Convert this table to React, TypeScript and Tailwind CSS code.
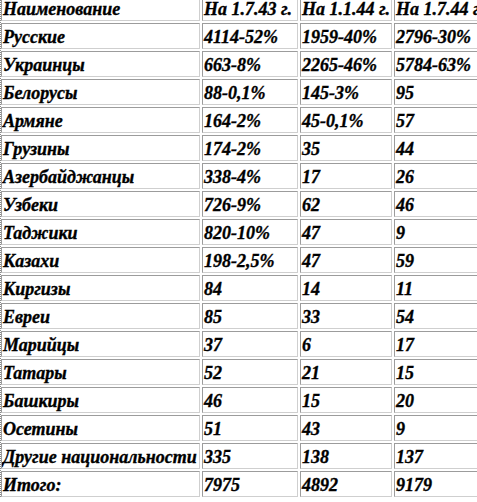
import React from "react";

const header = ["Наименование", "На 1.7.43 г.", "На 1.1.44 г.", "На 1.7.44 г."];

const rows: string[][] = [
  ["Русские", "4114-52%", "1959-40%", "2796-30%"],
  ["Украинцы", "663-8%", "2265-46%", "5784-63%"],
  ["Белорусы", "88-0,1%", "145-3%", "95"],
  ["Армяне", "164-2%", "45-0,1%", "57"],
  ["Грузины", "174-2%", "35", "44"],
  ["Азербайджанцы", "338-4%", "17", "26"],
  ["Узбеки", "726-9%", "62", "46"],
  ["Таджики", "820-10%", "47", "9"],
  ["Казахи", "198-2,5%", "47", "59"],
  ["Киргизы", "84", "14", "11"],
  ["Евреи", "85", "33", "54"],
  ["Марийцы", "37", "6", "17"],
  ["Татары", "52", "21", "15"],
  ["Башкиры", "46", "15", "20"],
  ["Осетины", "51", "43", "9"],
  ["Другие национальности", "335", "138", "137"],
  ["Итого:", "7975", "4892", "9179"],
];

const widths = ["w-[199px]", "w-[96px]", "w-[92px]", "w-[120px]"];

function Cell({ text, i }: { text: string; i: number }) {
  return (
    <div
      className={`${widths[i]} shrink-0 h-[26px] border-t border-l border-t-[#9c9c9c] border-l-[#9c9c9c] border-b border-r border-b-[#cfcfcf] border-r-[#cfcfcf] overflow-hidden whitespace-nowrap pl-[1px] flex items-center`}
    >
      <span className="text-[18px] leading-none font-bold italic text-black pt-[2px] [-webkit-text-stroke:0.35px_black]">
        {text}
      </span>
    </div>
  );
}

function Row({ cells }: { cells: string[] }) {
  return (
    <div className="flex gap-[2px]">
      {cells.map((c, i) => (
        <Cell key={i} text={c} i={i} />
      ))}
    </div>
  );
}

export default function App() {
  return (
    <div
      className="w-[477px] h-[502px] overflow-hidden bg-white"
      style={{ fontFamily: '"Liberation Serif", "Times New Roman", serif' }}
    >
      <div className="flex flex-col gap-[2px] -mt-[5px] border-l border-dotted border-l-[#888]">
        <Row cells={header} />
        {rows.map((r, i) => (
          <Row key={i} cells={r} />
        ))}
      </div>
    </div>
  );
}
